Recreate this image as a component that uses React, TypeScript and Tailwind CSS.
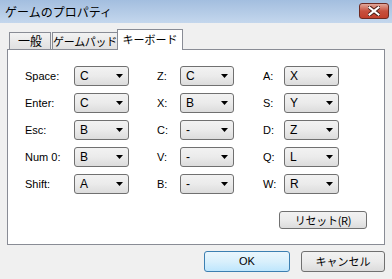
import React from "react";

const jp = { fontFamily: '"Noto Sans CJK JP", "Noto Sans", sans-serif' };
const lat = { fontFamily: '"Liberation Sans", Arial, sans-serif' };

function Dropdown({ value, w }: { value: string; w: string }) {
  return (
    <div
      className={`${w} h-[20px] flex items-center justify-between rounded-[3px] border border-[#707070] bg-gradient-to-b from-[#f2f2f2] via-[#ebebeb] to-[#dcdcdc] pl-[5px] pr-[4px] text-[12px] text-black`}
      style={lat}
    >
      <span className="leading-none">{value}</span>
      <svg width="8" height="5" viewBox="0 0 8 5">
        <path d="M0 0 H7 L3.5 4 Z" fill="#000" />
      </svg>
    </div>
  );
}

function Label({ text, pl }: { text: string; pl: string }) {
  return (
    <div className={`${pl} h-[20px] flex items-center text-[11px] text-black whitespace-nowrap`} style={lat}>
      {text}
    </div>
  );
}

const rows: [string, string, string, string, string, string][] = [
  ["Space:", "C", "Z:", "C", "A:", "X"],
  ["Enter:", "C", "X:", "B", "S:", "Y"],
  ["Esc:", "B", "C:", "-", "D:", "Z"],
  ["Num 0:", "B", "V:", "-", "Q:", "L"],
  ["Shift:", "A", "B:", "-", "W:", "R"],
];

export default function App() {
  return (
    <div className="w-[392px] h-[279px] bg-[#f0f0f0] flex flex-col overflow-hidden">
      {/* Title bar */}
      <div className="h-[23px] shrink-0 flex items-center justify-between bg-gradient-to-b from-[#a3bedf] to-[#c4d7ed] pl-[5px] pr-[3px]">
        <span className="text-[12px] text-black leading-none whitespace-nowrap" style={jp}>
          ゲームのプロパティ
        </span>
        <div className="w-[30px] h-[16px] -mt-[2px] rounded-[3px] border border-[#6e2a22] bg-gradient-to-b from-[#e0a79b] via-[#c7503e] to-[#c2402d] flex items-center justify-center">
          <svg width="12" height="10" viewBox="0 0 12 10">
            <path
              d="M1 1 L11 9 M11 1 L1 9"
              stroke="#4a1d16"
              strokeWidth="4"
              strokeLinecap="square"
            />
            <path
              d="M1.5 1.5 L10.5 8.5 M10.5 1.5 L1.5 8.5"
              stroke="#ffffff"
              strokeWidth="2.2"
              strokeLinecap="square"
            />
          </svg>
        </div>
      </div>

      {/* Tabs */}
      <div className="pt-[6px] px-[7px]">
        <div className="h-[20px] flex items-end pl-[2px]">
          <div
            className="w-[42px] h-[17px] border border-b-0 border-[#898c95] bg-gradient-to-b from-[#f3f3f3] to-[#e0e0e0] flex items-center justify-center text-[12px] leading-none text-black whitespace-nowrap"
            style={jp}
          >
            一般
          </div>
          <div
            className="ml-[1px] w-[66px] h-[17px] border border-b-0 border-[#898c95] bg-gradient-to-b from-[#f3f3f3] to-[#e0e0e0] flex items-center justify-center text-[11px] leading-none text-black whitespace-nowrap tracking-[-0.3px]"
            style={jp}
          >
            ゲームパッド
          </div>
          <div
            className="relative z-10 -ml-px w-[66px] h-[21px] -mb-px border border-b-0 border-[#898c95] bg-white flex items-center justify-center pb-[2px] text-[11px] leading-none text-black whitespace-nowrap"
            style={jp}
          >
            キーボード
          </div>
        </div>

        {/* Panel */}
        <div className="w-[378px] h-[196px] border border-[#898c95] bg-white flex flex-col">
          <div className="pt-[16px] pl-[17px] grid grid-cols-[49px_55px_51px_54px_50px_55px] gap-y-[7px]">
            {rows.map((r, i) => (
              <React.Fragment key={i}>
                <Label text={r[0]} pl="pl-0" />
                <Dropdown value={r[1]} w="w-[55px]" />
                <Label text={r[2]} pl="pl-[28px]" />
                <Dropdown value={r[3]} w="w-[54px]" />
                <Label text={r[4]} pl="pl-[29px]" />
                <Dropdown value={r[5]} w="w-[55px]" />
              </React.Fragment>
            ))}
          </div>
          <div className="flex justify-end pr-[17px] mt-[17px]">
            <div
              className="w-[88px] h-[18px] rounded-[3px] border border-[#707070] bg-gradient-to-b from-[#f2f2f2] via-[#ebebeb] to-[#dcdcdc] flex items-center justify-center text-[11px] leading-none text-black whitespace-nowrap tracking-[-0.3px]"
              style={jp}
            >
              リセット(R)
            </div>
          </div>
        </div>
      </div>

      {/* Bottom buttons */}
      <div className="flex justify-end gap-[11px] pr-[7px] pt-[6px]">
        <div
          className="w-[86px] h-[21px] rounded-[3px] border border-[#3c7fb1] bg-gradient-to-b from-[#eaf6fd] via-[#d9f0fc] to-[#bee6fd] flex items-center justify-center text-[11px] leading-none text-black"
          style={lat}
        >
          OK
        </div>
        <div
          className="w-[84px] h-[21px] rounded-[3px] border border-[#707070] bg-gradient-to-b from-[#f2f2f2] via-[#ebebeb] to-[#dcdcdc] flex items-center justify-center text-[11px] leading-none text-black whitespace-nowrap"
          style={jp}
        >
          キャンセル
        </div>
      </div>
    </div>
  );
}
